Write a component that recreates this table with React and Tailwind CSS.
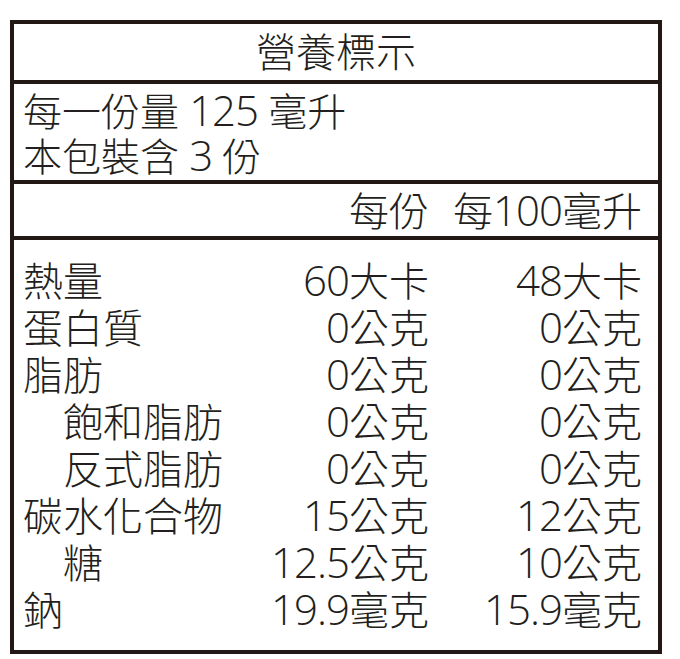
const FONT = { fontFamily: '"Open Sans", "Noto Sans CJK TC", sans-serif' };

const rows = [
  { name: "熱量", a: "60大卡", b: "48大卡" },
  { name: "蛋白質", a: "0公克", b: "0公克" },
  { name: "脂肪", a: "0公克", b: "0公克" },
  { name: "飽和脂肪", a: "0公克", b: "0公克", sub: true },
  { name: "反式脂肪", a: "0公克", b: "0公克", sub: true },
  { name: "碳水化合物", a: "15公克", b: "12公克" },
  { name: "糖", a: "12.5公克", b: "10公克", sub: true },
  { name: "鈉", a: "19.9毫克", b: "15.9毫克" },
];

// digits in the label are a touch larger than the CJK glyphs
function Val({ text }) {
  const m = text.match(/^([\d.]+)(.*)$/);
  if (!m) return text;
  return (
    <>
      <span className="text-[42px] font-[360] leading-none tracking-[-1px]">{m[1]}</span>
      {m[2]}
    </>
  );
}

export default function App() {
  return (
    <div className="w-[680px] h-[659px] bg-white pt-[20px] pl-[10px] text-[#231f20] font-light" style={FONT}>
      <div className="w-[652px] h-[634px] border-4 border-[#231815] flex flex-col">
        <div className="h-[60px] border-b-4 border-[#231815] flex items-center justify-center text-[40px]">
          營養標示
        </div>
        <div className="h-[100px] border-b-4 border-[#231815] pl-[9px] pt-[4px] text-[39px] leading-[45px]">
          <div>每一份量 <Val text="125" /> 毫升</div>
          <div>本包裝含 <Val text="3" /> 份</div>
        </div>
        <div className="h-[56px] border-b-4 border-[#231815] flex items-center justify-end pr-[16px] text-[40px] leading-[45px]">
          <span className="w-[200px] text-right">每份</span>
          <span className="w-[213px] text-right">每<Val text="100" />毫升</span>
        </div>
        <div className="flex-1 pt-[17px] pl-[9px] pr-[16px] text-[40px] leading-[47px]">
          {rows.map((r) => (
            <div key={r.name} className="flex h-[47px]">
              <div className={r.sub ? "flex-1 pl-[40px]" : "flex-1"}>{r.name}</div>
              <div className="w-[200px] text-right"><Val text={r.a} /></div>
              <div className="w-[213px] text-right"><Val text={r.b} /></div>
            </div>
          ))}
        </div>
      </div>
    </div>
  );
}
